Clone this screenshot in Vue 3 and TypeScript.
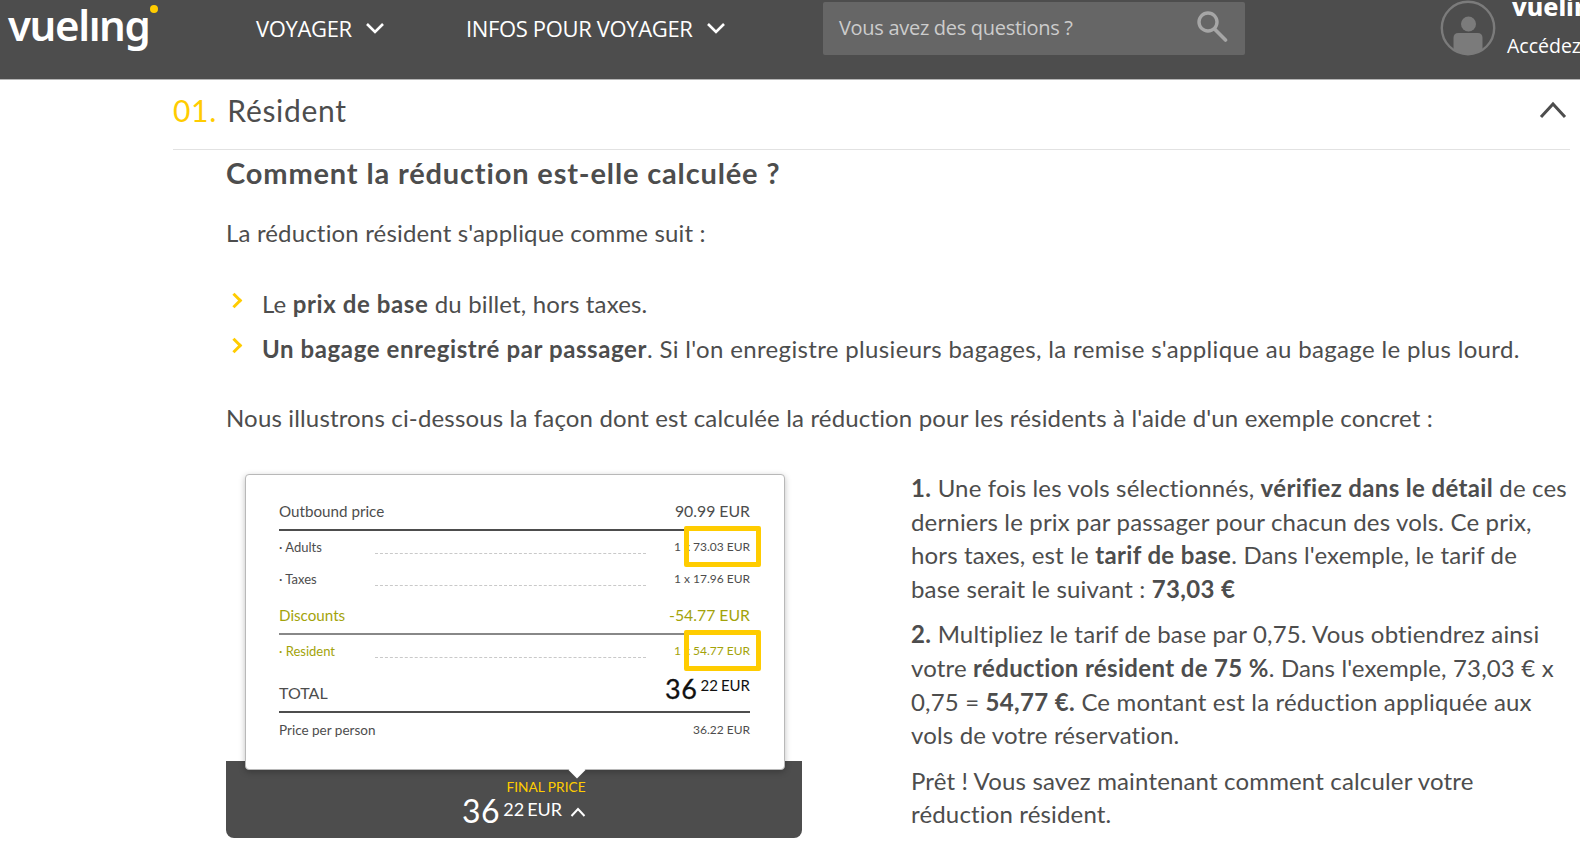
<script setup lang="ts">
interface Row {
  label: string
  value: string
  highlighted?: boolean
  green?: boolean
}
const adultRows: Row[] = [
  { label: '· Adults', value: '1 x 73.03 EUR', highlighted: true },
  { label: '· Taxes', value: '1 x 17.96 EUR' }
]
const discountRows: Row[] = [
  { label: '· Resident', value: '1 x 54.77 EUR', highlighted: true, green: true }
]
</script>

<template>
  <div class="page">
    <header class="topbar">
      <div class="logo" aria-label="vueling">vuelıng<span class="logo-dot"></span></div>
      <nav class="nav">
        <a class="nav-item nav-first">VOYAGER
          <svg width="20" height="12" viewBox="0 0 20 12"><path d="M2 2l8 8 8-8" fill="none" stroke="#fff" stroke-width="2.6"/></svg>
        </a>
        <a class="nav-item nav-second">INFOS POUR VOYAGER
          <svg width="20" height="12" viewBox="0 0 20 12"><path d="M2 2l8 8 8-8" fill="none" stroke="#fff" stroke-width="2.6"/></svg>
        </a>
      </nav>
      <div class="search">
        <span>Vous avez des questions ?</span>
        <svg class="search-icon" width="32" height="32" viewBox="0 0 32 32"><circle cx="12" cy="12" r="9" fill="none" stroke="#a6a6a6" stroke-width="3.4"/><path d="M18.5 19l11 11" stroke="#a6a6a6" stroke-width="3.6" stroke-linecap="round"/></svg>
      </div>
      <div class="account">
        <svg width="56" height="56" viewBox="0 0 56 56"><circle cx="28" cy="28" r="26.2" fill="none" stroke="#7b7b7b" stroke-width="2.4"/><circle cx="28.5" cy="24" r="7.5" fill="#7b7b7b"/><path d="M13.5 49.6V38q0-5 5-5h19q5 0 5 5V49.6A26 26 0 0 1 13.5 49.6z" fill="#7b7b7b"/></svg>
        <div class="account-text">
          <div class="account-brand">vueling club</div>
          <div class="account-link">Accédez à votre compte</div>
        </div>
      </div>
    </header>

    <main class="content">
      <div class="section-head">
        <h2><span class="num">01.</span> Résident</h2>
        <svg width="28" height="18" viewBox="0 0 28 18"><path d="M2 16L14 3l12 13" fill="none" stroke="#4d4d4d" stroke-width="3"/></svg>
      </div>
      <div class="body">
        <h3>Comment la réduction est-elle calculée ?</h3>
        <p class="intro">La réduction résident s'applique comme suit :</p>
        <ul>
          <li>Le <b>prix de base</b> du billet, hors taxes.</li>
          <li><b>Un bagage enregistré par passager</b>. Si l'on enregistre plusieurs bagages, la remise s'applique au bagage le plus lourd.</li>
        </ul>
        <p class="lead">Nous illustrons ci-dessous la façon dont est calculée la réduction pour les résidents à l'aide d'un exemple concret :</p>

        <div class="split">
          <figure class="shot">
            <div class="card">
              <div class="row head"><span>Outbound price</span><span class="head-val">90.99 EUR</span></div>
              <div v-for="r in adultRows" :key="r.label" class="row small">
                <span class="lab">{{ r.label }}</span><span class="dots"></span><span class="val">{{ r.value }}</span>
                <i v-if="r.highlighted" class="mark"></i>
              </div>
              <div class="row head green disc"><span>Discounts</span><span class="head-val">-54.77 EUR</span></div>
              <div v-for="r in discountRows" :key="r.label" class="row small green">
                <span class="lab">{{ r.label }}</span><span class="dots"></span><span class="val">{{ r.value }}</span>
                <i v-if="r.highlighted" class="mark"></i>
              </div>
              <div class="row total"><span>TOTAL</span><span class="amount"><b>36</b><sup>22</sup><sup>EUR</sup></span></div>
              <div class="row person"><span>Price per person</span><span class="person-val">36.22 EUR</span></div>
              <span class="notch"></span>
            </div>
            <div class="bar">
              <div class="final">FINAL PRICE</div>
              <div class="bar-price"><b>36</b><sup>22</sup><sup>EUR</sup>
                <svg width="16" height="10" viewBox="0 0 16 10"><path d="M1.5 9L8 2l6.5 7" fill="none" stroke="#fff" stroke-width="2"/></svg>
              </div>
            </div>
          </figure>
          <div class="steps">
            <p><b>1.</b> Une fois les vols sélectionnés, <b>vérifiez dans le détail</b> de ces derniers le prix par passager pour chacun des vols. Ce prix, hors taxes, est le <b>tarif de base</b>. Dans l'exemple, le tarif de base serait le suivant : <b>73,03 €</b></p>
            <p><b>2.</b> Multipliez le tarif de base par 0,75. Vous obtiendrez ainsi votre <b>réduction résident de 75 %</b>. Dans l'exemple, 73,03 € x 0,75 = <b>54,77 €.</b> Ce montant est la réduction appliquée aux vols de votre réservation.</p>
            <p>Prêt ! Vous savez maintenant comment calculer votre réduction résident.</p>
          </div>
        </div>
      </div>
    </main>
  </div>
</template>

<style>
html, body { margin: 0; background: #fff; overflow: hidden; }
</style>

<style scoped>
.page { width: 1580px; height: 841px; overflow: hidden; font-family: Lato, sans-serif; color: #4d4d4d; }
.topbar { height: 79px; background: #4d4d4d; border-bottom: 1px solid #b5b5b5; display: flex; position: relative; overflow: hidden; color: #fff; font-family: "Open Sans", sans-serif; }
.logo { width: 256px; flex: none; box-sizing: border-box; padding-left: 8px; font: 600 42px/50px "Noto Sans", sans-serif; letter-spacing: -1.4px; position: relative; }
.logo-dot { position: absolute; left: 150px; top: 5px; width: 8px; height: 8px; border-radius: 50%; background: #fc0; }
.nav { display: flex; height: 55px; align-items: center; flex: none; }
.nav-item { display: flex; align-items: center; gap: 13px; font-size: 22px; letter-spacing: -0.35px; white-space: nowrap; }
.nav-item svg { margin-top: 1px; }
.nav-first { width: 210px; }
.nav-second { width: 357px; }
.search { width: 422px; height: 53px; margin-top: 2px; flex: none; box-sizing: border-box; background: #666; border-radius: 2px; display: flex; align-items: center; justify-content: space-between; padding: 0 17px 0 16px; font-size: 20px; letter-spacing: -0.3px; color: #ccc; }
.search span { margin-top: -2px; }
.search-icon { margin-top: -6px; }
.account { display: flex; margin-left: 195px; flex: none; white-space: nowrap; }
.account-text { margin-left: 11px; }
.account-brand { font: 800 25px/20px "Noto Sans", sans-serif; margin-top: -4px; padding-left: 5px; }
.account-link { font-size: 19.5px; line-height: 26px; margin-top: 17px; }
.content { padding: 0 10px 0 173px; }
.section-head { height: 70px; box-sizing: border-box; padding: 0 3px 10px 0; display: flex; align-items: center; justify-content: space-between; border-bottom: 1px solid #e2e2e2; }
h2 { margin: 0; font-size: 30px; font-weight: 400; letter-spacing: .7px; color: #4d4d4d; }
.num { color: #fc0; margin-right: 2px; }
.body { padding-left: 53px; font-size: 24px; line-height: 34px; letter-spacing: .16px; }
.body b { letter-spacing: .6px; }
h3 { margin: 6px 0 0; font-size: 29px; font-weight: 700; line-height: 34px; letter-spacing: .85px; }
.intro { margin: 26px 0 0; }
ul { list-style: none; padding: 0; margin: 37px 0 0; }
li { position: relative; padding-left: 36px; margin-bottom: 11px; white-space: nowrap; }
li:last-child { letter-spacing: .34px; }
li::before { content: ""; position: absolute; left: 3px; top: 8px; width: 8px; height: 8px; border: solid #fc0; border-width: 3.5px 3.5px 0 0; transform: rotate(45deg); }
.lead { margin: 35px 0 0; white-space: nowrap; }
.split { display: flex; margin-top: 39px; }
.shot { margin: 0; width: 576px; flex: none; position: relative; font-size: 14px; line-height: 18px; letter-spacing: 0; }
.card { position: relative; z-index: 1; box-sizing: border-box; width: 540px; height: 296px; margin-left: 19px; background: #fff; border: 1px solid #b8b8b8; border-radius: 4px; box-shadow: 0 2px 6px rgba(0,0,0,.25); padding: 24px 34px 0 33px; color: #4d4d4d; }
.notch { position: absolute; left: 325px; bottom: -7px; width: 12px; height: 12px; background: #fff; transform: rotate(45deg); }
.row { display: flex; justify-content: space-between; align-items: center; position: relative; }
.head { height: 32px; border-bottom: 2px solid #4d4d4d; font-size: 15.2px; padding-bottom: 7px; box-sizing: border-box; }
.head-val { font-size: 15.8px; }
.disc { margin-top: 8px; border-bottom-color: #888; }
.small { height: 32px; font-size: 13px; color: #4d4d4d; }
.lab { width: 96px; flex: none; }
.dots { flex: none; width: 271px; border-bottom: 1px dashed #c9c9c9; align-self: flex-end; margin-bottom: 9px; }
.val { margin-left: auto; font-size: 12px; }
.green, .small.green { color: #a3a30a; }
.mark { position: absolute; right: -11px; top: -5px; width: 77px; height: 41px; box-sizing: border-box; border: 5px solid #fc0; border-radius: 2px; }
.total { height: 41px; border-bottom: 2px solid #4d4d4d; margin-top: 5px; padding-top: 3px; box-sizing: border-box; font-size: 16px; }
.amount { color: #111; padding-bottom: 9px; display: flex; align-items: flex-start; }
.amount b { font-size: 27px; font-weight: 400; line-height: 30px; -webkit-text-stroke: .3px #111; }
.amount sup { font-size: 15px; line-height: 22px; vertical-align: baseline; margin-left: 3px; }
.person { font-size: 13.5px; margin-top: 8px; }
.person-val { font-size: 12px; }
.bar { box-sizing: border-box; height: 77px; margin-top: -9px; background: #4d4d4d; border-radius: 0 0 8px 8px; color: #fff; text-align: center; padding-top: 17px; }
.final { color: #fc0; font-size: 13.7px; line-height: 18px; padding-left: 64px; }
.bar-price { display: flex; justify-content: center; align-items: flex-start; margin-left: 20px; margin-top: -4px; }
.bar-price b { font-size: 32px; font-weight: 400; line-height: 38px; }
.bar-price sup { vertical-align: baseline; line-height: 34px; font-size: 18px; margin-left: 3px; }
.bar-price svg { margin: 15px 0 0 8px; }
.steps { width: 660px; margin-left: 109px; margin-top: -3px; flex: none; }
.steps p { margin: 0 0 12px; line-height: 33.6px; }
.steps b { letter-spacing: .35px; }
</style>
